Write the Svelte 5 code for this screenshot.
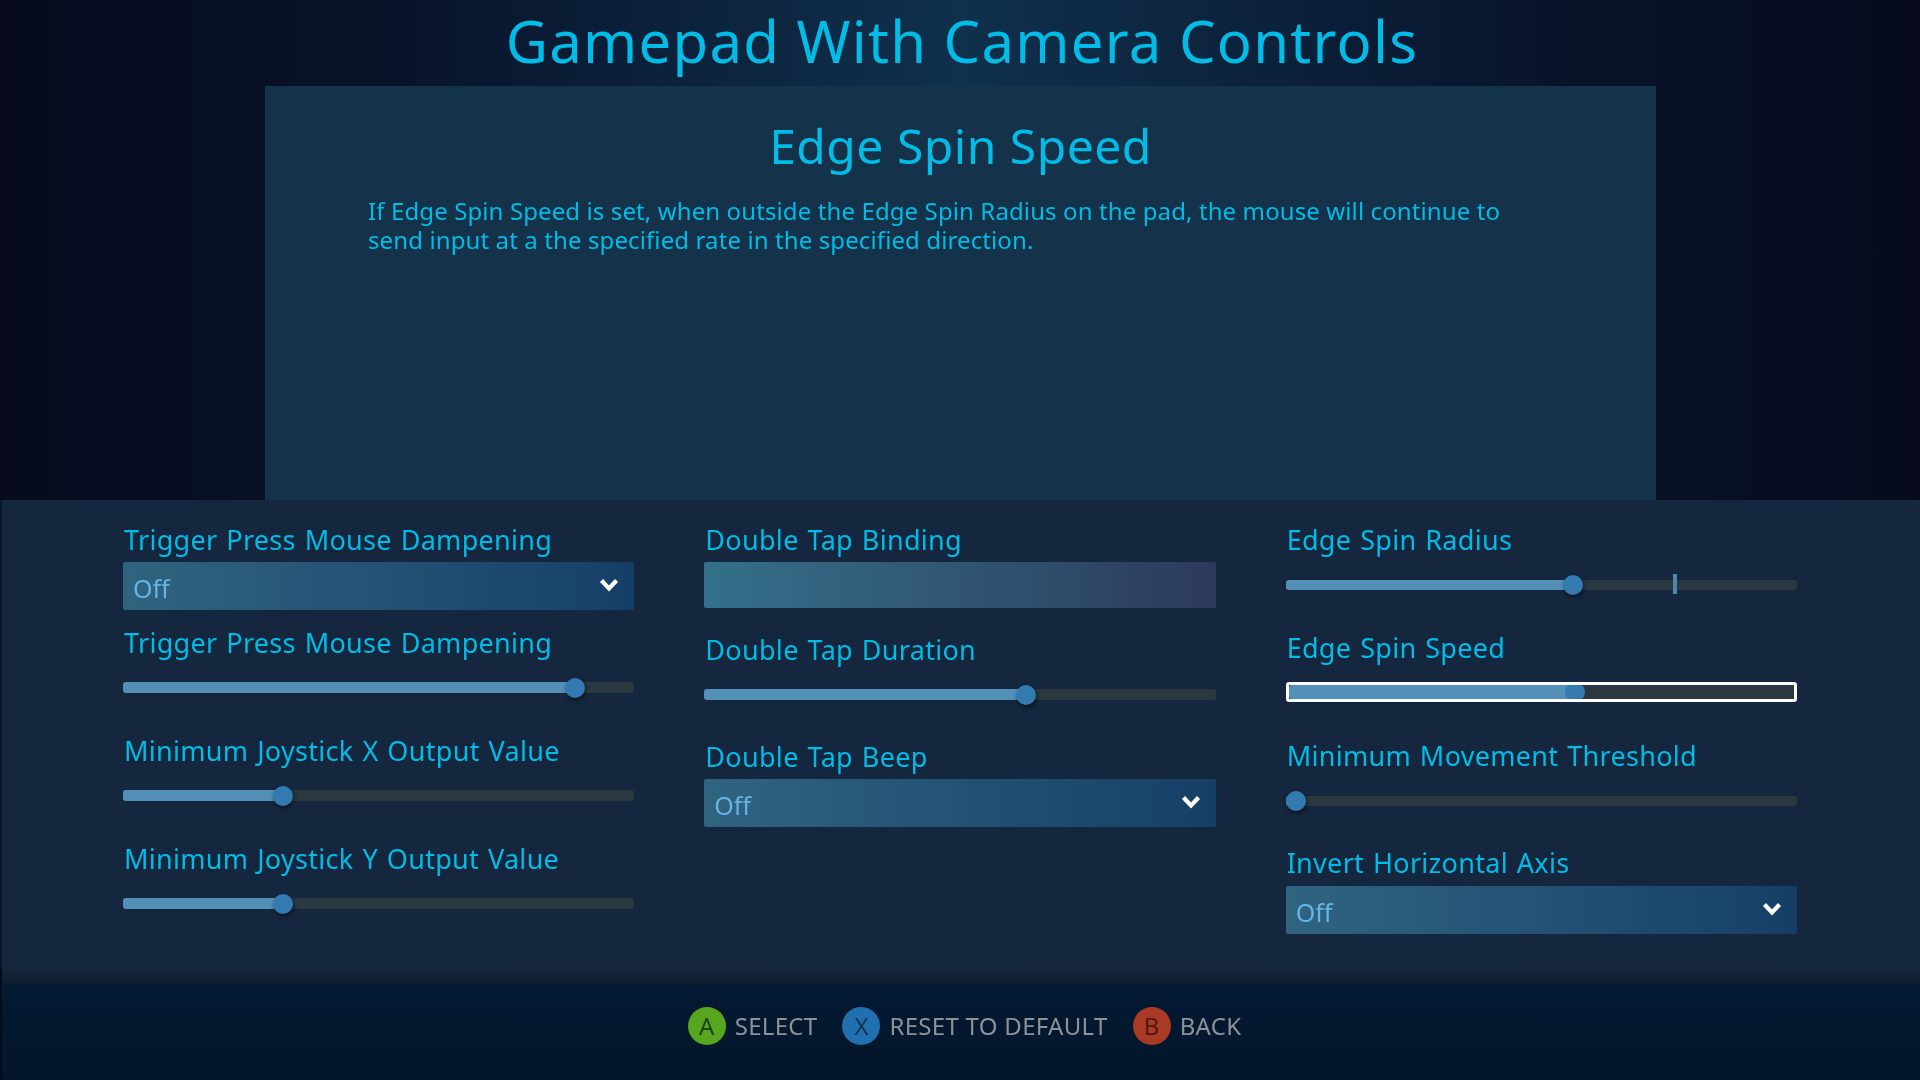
<script>
  const sliders = {
    dampening: { value: 88.4 },
    joyX: { value: 31.2 },
    joyY: { value: 31.2 },
    duration: { value: 63 },
    radius: { value: 56.2, tick: 76.1 },
    speed: { value: 56.6 },
    threshold: { value: 2 }
  };
</script>

{#snippet slider(s, extra = '')}
  <div class="track {extra}">
    <div class="fill" style="width:{s.value}%"></div>
    {#if s.tick}<div class="tick" style="left:{s.tick}%"></div>{/if}
    <div class="thumb" style="left:{s.value}%"></div>
  </div>
{/snippet}

{#snippet dropdown(extra = '')}
  <div class="dropdown {extra}">
    <span>Off</span>
    <svg width="20" height="16" viewBox="0 0 20 16"><path d="M2.5 3.5 L10 11.5 L17.5 3.5" fill="none" stroke="#fff" stroke-width="4.2"/></svg>
  </div>
{/snippet}

<div class="page">
  <header class="top"><h1>Gamepad With Camera Controls</h1></header>
  <section class="info">
    <h2>Edge Spin Speed</h2>
    <p>If Edge Spin Speed is set, when outside the Edge Spin Radius on the pad, the mouse will continue to send input at a the specified rate in the specified direction.</p>
  </section>
  <main class="settings">
    <div class="col">
      <div class="label">Trigger Press Mouse Dampening</div>
      {@render dropdown('near')}
      <div class="label g17">Trigger Press Mouse Dampening</div>
      {@render slider(sliders.dampening)}
      <div class="label g42">Minimum Joystick X Output Value</div>
      {@render slider(sliders.joyX)}
      <div class="label g42">Minimum Joystick Y Output Value</div>
      {@render slider(sliders.joyY)}
    </div>
    <div class="col">
      <div class="label">Double Tap Binding</div>
      <div class="binding"></div>
      <div class="label g26">Double Tap Duration</div>
      {@render slider(sliders.duration)}
      <div class="label g41">Double Tap Beep</div>
      {@render dropdown('near')}
    </div>
    <div class="col">
      <div class="label">Edge Spin Radius</div>
      {@render slider(sliders.radius, 'thin')}
      <div class="label g42">Edge Spin Speed</div>
      {@render slider(sliders.speed, 'focused')}
      <div class="label g38">Minimum Movement Threshold</div>
      {@render slider(sliders.threshold, 'thin')}
      <div class="label g41">Invert Horizontal Axis</div>
      {@render dropdown('near7')}
    </div>
  </main>
  <footer class="foot">
    <div class="hint"><span class="btn a">A</span><span>SELECT</span></div>
    <div class="hint"><span class="btn x">X</span><span>RESET TO DEFAULT</span></div>
    <div class="hint"><span class="btn b">B</span><span>BACK</span></div>
  </footer>
</div>

<style>
  :global(body) { margin: 0; background: #060d20; }
  .page {
    width: 1920px; height: 1080px; overflow: hidden;
    display: flex; flex-direction: column;
    font-family: "Noto Sans", sans-serif;
    background: linear-gradient(90deg, #060a1c 0%, #08132a 20%, #10304c 50%, #08132a 82%, #060a1c 100%);
    filter: blur(0.35px);
  }
  .top { height: 86px; display: flex; justify-content: center; flex: none; padding-left: 4px; }
  h1 { margin: 0; font-weight: 400; font-size: 58px; line-height: 81px; color: #00bce6; letter-spacing: 1.26px; }
  .info {
    flex: none; box-sizing: border-box; height: 414px; width: 1391px; margin-left: 265px;
    background: #14334b; color: #00bce6; padding: 0 130px 0 103px;
  }
  h2 { margin: 0; padding: 29px 0 0 27px; text-align: center; font-weight: 400; font-size: 48px; line-height: 62px; letter-spacing: 0.5px; }
  p { margin: 19px 0 0; font-size: 24px; line-height: 29.4px; letter-spacing: 0.11px; }
  .settings {
    flex: none; box-sizing: border-box; height: 475px; background: #14273e;
    padding: 24px 123px 0; display: grid; grid-template-columns: repeat(3, 1fr); column-gap: 70px;
    box-shadow: inset 2px 0 0 #0a1729;
  }
  .col { display: flex; flex-direction: column; min-width: 0; }
  .label { font-size: 27px; line-height: 31px; color: #00bce6; height: 32px; white-space: nowrap; letter-spacing: 0.3px; word-spacing: 1.5px; padding-left: 1px; }
  .g17 { margin-top: 17px; } .g26 { margin-top: 26px; } .g38 { margin-top: 38px; }
  .g41 { margin-top: 41px; } .g42 { margin-top: 42px; }
  .dropdown {
    height: 48px; border-radius: 2px; display: flex; align-items: center; justify-content: space-between;
    padding: 0 15px 0 10px; color: #66b4e6; font-size: 25px;
    background: linear-gradient(90deg, #2f6480, #163f68);
  }
  .dropdown span { padding-top: 3px; }
  .dropdown svg { margin-top: -3px; }
  .near { margin-top: 6px; } .near7 { margin-top: 7px; }
  .binding { margin-top: 6px; height: 46px; border-radius: 2px; background: linear-gradient(90deg, #33708a, #2d3a5c); }
  .track { position: relative; height: 11px; margin-top: 23px; background: #29393f; border-radius: 3px; flex: none; }
  .track.thin { height: 10px; margin-top: 24px; }
  .track.focused { box-sizing: border-box; height: 20px; margin-top: 18px; border: 3px solid #fff; border-radius: 3px; overflow: hidden; }
  .fill { position: absolute; left: 0; top: 0; bottom: 0; background: #5390b8; border-radius: 3px 0 0 3px; }
  .thumb {
    position: absolute; top: 50%; width: 20px; height: 20px; margin: -10px 0 0 -10px; border-radius: 50%;
    background: #337ab0; box-shadow: 1px 2px 4px rgba(0,0,0,.55);
  }
  .focused .thumb { box-shadow: none; }
  .tick { position: absolute; top: -6px; bottom: -4px; width: 4px; margin-left: -2px; background: #4f86ad; }
  .foot {
    flex: 1; display: flex; align-items: center; justify-content: center; gap: 25px; padding: 8px 0 4px 9px;
    margin-top: -8px;
    background: linear-gradient(180deg, #14273e 0, #11202f 14px, #041a33 18px, #03152a 100%);
    box-shadow: inset 2px 0 0 #030c18;
    color: #8b9299; font-size: 24px; letter-spacing: 0.3px;
  }
  .foot .hint { filter: blur(0.35px); }
  .hint { display: flex; align-items: center; gap: 9px; }
  .btn {
    width: 38px; height: 38px; border-radius: 50%; display: flex; align-items: center; justify-content: center;
    font-size: 24px; line-height: 1; letter-spacing: 0;
  }
  .a { background: #58a61f; color: #1a4510; }
  .x { background: #206fae; color: #123553; }
  .b { background: #a83a26; color: #581810; }
</style>
